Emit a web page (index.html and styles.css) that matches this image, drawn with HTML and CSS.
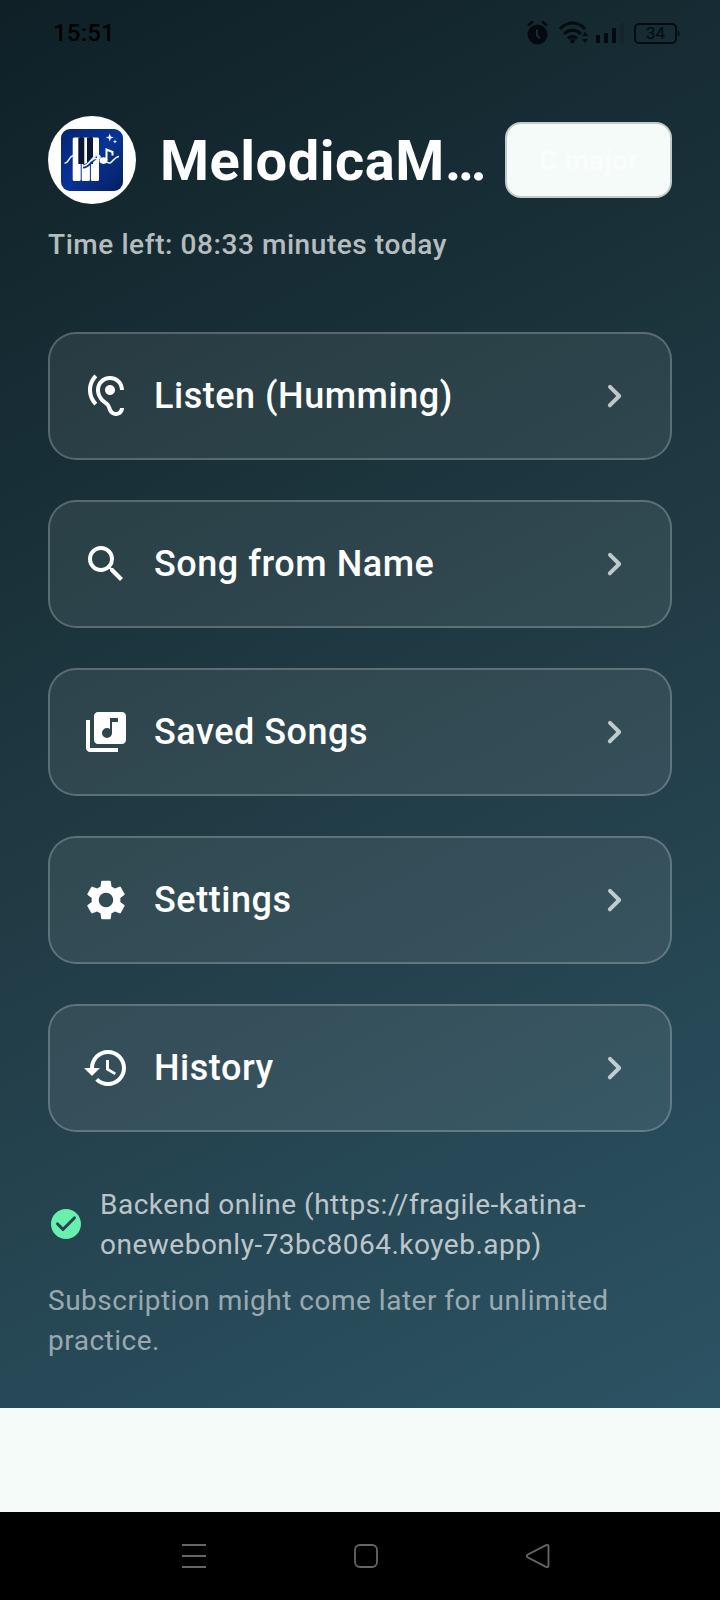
FILE: index.html
```html
<!DOCTYPE html>
<html lang="en">
<head>
<meta charset="utf-8">
<title>Melodica</title>
<link rel="stylesheet" href="styles.css">
</head>
<body>
<main class="screen">
  <div class="status-bar">
    <span class="clock">15:51</span>
    <svg class="status-icons" width="156" height="30" viewBox="0 0 156 30">
      <circle cx="11.500" cy="16.500" r="10"/>
      <path class="line" d="M2 7.500l5-4M21 7.500l-5-4" stroke-width="2.500"/>
      <path d="M11 11.500v6l3 3" fill="none" stroke="#172b33" stroke-width="2"/>
      <path class="line" d="M34 11c7-8 18-8 25 0M38 16c5-5 12-5 17 0M42 20.500c3-2.600 6-2.600 9 0" stroke-width="3"/>
      <circle cx="46.500" cy="23" r="2.300"/>
      <path d="M56 18l3-4 3 4zM56 21l3 4 3-4z"/>
      <path d="M70 17h4v8h-4zM78 15h4v10h-4zM86 10h4v15h-4z"/>
      <path d="M94 5h4v20h-4z" opacity=".15"/>
      <rect class="line" x="109" y="6" width="41" height="19" rx="4" stroke-width="1.800"/>
      <path d="M152 12q3 3.500 0 7z"/>
      <text x="129.500" y="21" text-anchor="middle">34</text>
    </svg>
  </div>

  <header class="header">
    <div class="avatar">
      <svg width="62" height="62" viewBox="0 0 62 62">
        <defs>
          <linearGradient id="tile" x1="0" y1="0" x2="1" y2="1">
            <stop offset="0" stop-color="#062672"/><stop offset=".5" stop-color="#073297"/><stop offset="1" stop-color="#06205f"/>
          </linearGradient>
        </defs>
        <rect width="62" height="62" rx="9" fill="url(#tile)"/>
        <rect x="11.700" y="8.600" width="8" height="43.400" rx="1.500" fill="#fff"/>
        <rect x="20.700" y="8.600" width="8.200" height="43.400" rx="1.500" fill="#fff"/>
        <rect x="29.900" y="8.600" width="8.100" height="43.400" rx="1.500" fill="#fff"/>
        <path fill="#0b1634" d="M17.300 8.600h6V35h-6zM26 8.600h6V35h-6z"/>
        <path d="M22 37.500c7 0 9-9 14-9" fill="none" stroke="#0a3188" stroke-width="4"/>
        <path d="M3.500 34c4 1 4-6 8.500-7.500M22 37c7 0 8-9.500 14-10.500 3-.5 4 2 2 3M30 32c4-4 6-3 7 0M46 33c5 4 6-5 12-5.500" fill="none" stroke="#e9f1ff" stroke-width="1.600"/>
        <path d="M45.500 31V20.500l6 2.500v3.500" fill="none" stroke="#fff" stroke-width="2"/>
        <ellipse cx="42.500" cy="31.600" rx="4" ry="3.300" fill="#fff"/>
        <path fill="#fff" d="M48.700 4.600l1 3 3 1-3 1-1 3-1-3-3-1 3-1zM54 10.600l.6 1.400 1.400.6-1.400.6-.6 1.400-.6-1.400-1.400-.6 1.400-.6z"/>
      </svg>
    </div>
    <h1 class="title">MelodicaM…</h1>
    <button class="key-button">C major</button>
  </header>
  <p class="time-left">Time left: 08:33 minutes today</p>

  <nav class="menu">
    <a class="card">
      <svg class="icon" viewBox="0 0 24 24"><path d="M17 20c-.29 0-.56-.06-.76-.15-.71-.37-1.21-.88-1.71-2.38-.51-1.56-1.47-2.29-2.39-3-.79-.61-1.61-1.24-2.32-2.530C9.290 10.980 9 9.930 9 9c0-2.800 2.200-5 5-5s5 2.200 5 5h2c0-3.930-3.070-7-7-7S7 5.070 7 9c0 1.260.38 2.650 1.070 3.900.91 1.650 1.980 2.480 2.850 3.150.81.62 1.390 1.070 1.710 2.050.6 1.820 1.370 2.840 2.730 3.550.51.23 1.070.35 1.640.35 2.210 0 4-1.790 4-4h-2c0 1.100-.9 2-2 2zM7.640 2.640L6.220 1.220C4.230 3.210 3 5.960 3 9s1.230 5.790 3.220 7.780l1.410-1.410C6.010 13.740 5 11.490 5 9s1.010-4.740 2.640-6.360zM11.500 9c0 1.380 1.120 2.500 2.500 2.500s2.500-1.120 2.500-2.500-1.120-2.500-2.500-2.500-2.500 1.120-2.500 2.500z"/></svg>
      <span class="label">Listen (Humming)</span>
      <svg class="icon chevron" viewBox="0 0 24 24"><path d="M9.290 6.710a1 1 0 0 0 0 1.410L13.170 12l-3.880 3.880a1 1 0 1 0 1.410 1.410l4.590-4.590a1 1 0 0 0 0-1.410L10.700 6.700c-.38-.38-1.020-.38-1.410.01z"/></svg>
    </a>
    <a class="card">
      <svg class="icon" viewBox="0 0 24 24"><path d="M15.500 14h-.79l-.28-.27A6.470 6.470 0 0 0 16 9.500 6.500 6.500 0 1 0 9.500 16c1.610 0 3.090-.59 4.230-1.570l.27.28v.79l5 4.990L20.490 19l-4.990-5zm-6 0C7.010 14 5 11.990 5 9.500S7.010 5 9.500 5 14 7.010 14 9.500 11.990 14 9.500 14z"/></svg>
      <span class="label">Song from Name</span>
      <svg class="icon chevron" viewBox="0 0 24 24"><path d="M9.290 6.710a1 1 0 0 0 0 1.410L13.170 12l-3.880 3.880a1 1 0 1 0 1.410 1.410l4.590-4.590a1 1 0 0 0 0-1.410L10.700 6.700c-.38-.38-1.020-.38-1.410.01z"/></svg>
    </a>
    <a class="card">
      <svg class="icon" viewBox="0 0 24 24"><path d="M20 2H8c-1.100 0-2 .9-2 2v12c0 1.100.9 2 2 2h12c1.100 0 2-.9 2-2V4c0-1.100-.9-2-2-2zm-2 5h-3v5.500a2.500 2.500 0 1 1-2.500-2.500c.57 0 1.080.19 1.500.51V5h4v2zM4 6H2v14c0 1.100.9 2 2 2h14v-2H4V6z"/></svg>
      <span class="label">Saved Songs</span>
      <svg class="icon chevron" viewBox="0 0 24 24"><path d="M9.290 6.710a1 1 0 0 0 0 1.410L13.170 12l-3.880 3.880a1 1 0 1 0 1.410 1.410l4.590-4.590a1 1 0 0 0 0-1.410L10.700 6.700c-.38-.38-1.020-.38-1.410.01z"/></svg>
    </a>
    <a class="card">
      <svg class="icon" viewBox="0 0 24 24"><path d="M19.140 12.940c.04-.3.060-.61.060-.94 0-.32-.02-.64-.07-.94l2.030-1.580a.49.49 0 0 0 .12-.61l-1.920-3.320a.488.488 0 0 0-.59-.22l-2.390.96c-.5-.38-1.030-.7-1.620-.94l-.36-2.540a.484.484 0 0 0-.48-.41h-3.840c-.24 0-.43.17-.47.41l-.36 2.540c-.59.24-1.130.57-1.620.94l-2.390-.96c-.22-.08-.47 0-.59.22L2.740 8.870c-.12.21-.08.47.12.61l2.030 1.580c-.05.3-.09.63-.09.94s.02.64.07.94l-2.030 1.580a.49.49 0 0 0-.12.61l1.920 3.320c.12.22.37.29.59.22l2.390-.96c.5.38 1.030.7 1.620.94l.36 2.540c.05.24.24.41.48.41h3.840c.24 0 .44-.17.47-.41l.36-2.540c.59-.24 1.130-.56 1.620-.94l2.390.96c.22.08.47 0 .59-.22l1.920-3.320c.12-.22.07-.47-.12-.61l-2.010-1.580zM12 15.600c-1.980 0-3.600-1.620-3.600-3.600s1.620-3.600 3.600-3.600 3.600 1.620 3.600 3.600-1.620 3.600-3.600 3.600z"/></svg>
      <span class="label">Settings</span>
      <svg class="icon chevron" viewBox="0 0 24 24"><path d="M9.290 6.710a1 1 0 0 0 0 1.410L13.170 12l-3.880 3.880a1 1 0 1 0 1.410 1.410l4.590-4.590a1 1 0 0 0 0-1.410L10.700 6.700c-.38-.38-1.020-.38-1.410.01z"/></svg>
    </a>
    <a class="card">
      <svg class="icon" viewBox="0 0 24 24"><path d="M13 3c-4.970 0-9 4.030-9 9H1l3.890 3.890.07.14L9 12H6c0-3.870 3.130-7 7-7s7 3.130 7 7-3.130 7-7 7c-1.930 0-3.680-.79-4.940-2.060l-1.420 1.420C8.270 19.990 10.510 21 13 21c4.970 0 9-4.030 9-9s-4.030-9-9-9zm-1 5v5l4.280 2.540.72-1.210-3.500-2.080V8H12z"/></svg>
      <span class="label">History</span>
      <svg class="icon chevron" viewBox="0 0 24 24"><path d="M9.290 6.710a1 1 0 0 0 0 1.410L13.170 12l-3.880 3.880a1 1 0 1 0 1.410 1.410l4.590-4.590a1 1 0 0 0 0-1.410L10.700 6.700c-.38-.38-1.020-.38-1.410.01z"/></svg>
    </a>
  </nav>

  <div class="backend">
    <svg class="check" viewBox="0 0 24 24"><path d="M12 2C6.480 2 2 6.480 2 12s4.480 10 10 10 10-4.480 10-10S17.520 2 12 2zM9.290 16.290L5.700 12.700a1 1 0 1 1 1.410-1.410L10 14.170l6.880-6.880a1 1 0 1 1 1.410 1.410l-7.590 7.590a1 1 0 0 1-1.410 0z"/></svg>
    <p class="backend-text">Backend online (https://fragile-katina-<br>onewebonly-73bc8064.koyeb.app)</p>
  </div>
  <p class="note">Subscription might come later for unlimited<br>practice.</p>
</main>
<div class="blank"></div>
<footer class="nav-bar">
  <svg width="26" height="26" viewBox="0 0 26 26"><path d="M1 2h24M1 13h24M1 24h24"/></svg>
  <svg width="26" height="26" viewBox="0 0 26 26"><rect x="2" y="2" width="22" height="22" rx="5"/></svg>
  <svg width="26" height="26" viewBox="0 0 26 26"><path d="M2.500 11.700L21 2.200q2.500-.8 2.500 1.300v19q0 2.100-2.500 1.300L2.500 14.300q-1.500-1.300 0-2.600z"/></svg>
</footer>
</body>
</html>
```
FILE: styles.css
```css
* { box-sizing: border-box; }

body {
  margin: 0;
  width: 720px;
  height: 1600px;
  display: flex;
  flex-direction: column;
  font-family: Roboto, "Noto Sans", sans-serif;
  color: #fff;
  background: #f5fbf9;
}

h1, p { margin: 0; }

.screen {
  height: 1408px;
  padding: 0 48px;
  background: linear-gradient(152.920deg, #0f2027 0%, #203a43 50%, #2c5364 100%);
}

.status-bar {
  height: 116px;
  padding: 18px 0 0 5px;
  display: flex;
  justify-content: space-between;
  align-items: flex-start;
}

.clock {
  color: #000;
  font-size: 24px;
  line-height: 30px;
  font-weight: 500;
  letter-spacing: .2px;
}

.status-icons {
  margin-right: -10px;
  fill: #040a0d;
  font-size: 17px;
}

.line {
  fill: none;
  stroke: #040a0d;
}

.header {
  height: 88px;
  display: flex;
  align-items: center;
}

.avatar {
  width: 88px;
  height: 88px;
  border-radius: 50%;
  background: #fff;
  display: flex;
  align-items: center;
  justify-content: center;
}

.title {
  flex: 1;
  margin-left: 24px;
  padding-top: 2px;
  font-size: 56px;
  line-height: 72px;
  font-weight: 700;
  letter-spacing: .5px;
  white-space: nowrap;
}

.key-button {
  width: 167px;
  height: 76px;
  padding: 2px 0 0;
  border: 2px solid #c0cbca;
  border-radius: 16px;
  background: #f5fbf9;
  color: #fbfdfc;
  font: 700 28px/40px Roboto, sans-serif;
  letter-spacing: .2px;
}

.time-left {
  margin-top: 21px;
  height: 40px;
  color: rgba(255, 255, 255, .7);
  font-size: 28px;
  line-height: 40px;
  font-weight: 500;
  letter-spacing: .57px;
}

.menu {
  margin-top: 67px;
  display: flex;
  flex-direction: column;
  gap: 40px;
}

.card {
  height: 128px;
  padding: 0 32px;
  border: 2px solid rgba(255, 255, 255, .28);
  border-radius: 28px;
  background: rgba(255, 255, 255, .08);
  background-clip: padding-box;
  display: flex;
  align-items: center;
}

.icon {
  width: 48px;
  height: 48px;
  fill: #fff;
}

.chevron { fill: rgba(255, 255, 255, .7); }

.label {
  flex: 1;
  margin-left: 24px;
  font-size: 36px;
  line-height: 48px;
  font-weight: 500;
  letter-spacing: .53px;
}

.backend {
  margin-top: 53px;
  display: flex;
  align-items: center;
  gap: 16px;
}

.check {
  width: 36px;
  height: 36px;
  margin-top: -2px;
  fill: #69f0ae;
}

.backend-text, .note {
  font-size: 28px;
  line-height: 40px;
  letter-spacing: .5px;
  white-space: nowrap;
}

.backend-text { color: rgba(255, 255, 255, .7); }

.note {
  margin-top: 16px;
  color: rgba(255, 255, 255, .54);
}

.blank { height: 104px; }

.nav-bar {
  height: 88px;
  padding: 0 169px 0 181px;
  background: #000;
  display: flex;
  align-items: center;
  justify-content: space-between;
}

.nav-bar svg {
  fill: none;
  stroke: #666;
  stroke-width: 1.800;
}
```
